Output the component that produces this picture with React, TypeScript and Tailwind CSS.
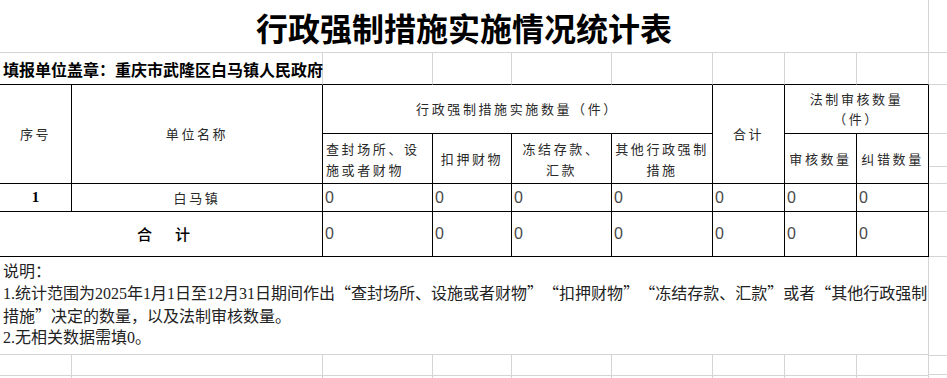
import React from 'react';

const cols = [72, 251, 110, 79, 100, 101, 72, 72, 72];

const head = "font-['Noto_Sans_CJK_SC',sans-serif] text-[13px] tracking-[2.6px] text-[#2a2a2a] font-normal";
const zero = "font-['Liberation_Sans_Narrow','Liberation_Sans',sans-serif] text-[16px] text-[#4a4a4a] text-left align-middle pl-[2px] border-r border-b border-black";
const blk = 'border-r border-b border-black';
const gry = 'border-r border-b border-[#d4d4d4]';

const Num: React.FC<{ children: React.ReactNode }> = ({ children }) => (
  <span className="font-['Liberation_Serif',serif]">{children}</span>
);

// full-width curly quotes, as the sheet's Song font draws them
const Lq = () => <span className="inline-block w-[16px] text-right">“</span>;
const Rq = () => <span className="inline-block w-[16px] text-left">”</span>;

const sideRows = [53, 32, 49, 33, 17, 28, 45, 99, 19, 21];

export default function App() {
  return (
    <div className="w-[947px] h-[378px] overflow-hidden bg-white flex">
      <table className="table-fixed border-separate border-spacing-0 w-[929px] shrink-0">
        <colgroup>
          {cols.map((w, i) => (
            <col key={i} style={{ width: w }} />
          ))}
        </colgroup>
        <tbody>
          {/* Title */}
          <tr className="h-[53px]">
            <td colSpan={9} className={`${gry} text-center align-middle font-['Noto_Sans_CJK_SC',sans-serif] font-bold text-[32px] text-black pt-[1px]`}>
              行政强制措施实施情况统计表
            </td>
          </tr>

          {/* Filler row */}
          <tr className="h-[32px]">
            <td colSpan={2} className="border-r border-[#d4d4d4] border-b border-b-black pl-[3px] align-middle whitespace-nowrap font-['Noto_Sans_CJK_SC',sans-serif] font-bold text-[16px] text-black">
              填报单位盖章：重庆市武隆区白马镇人民政府
            </td>
            {[0, 1, 2, 3, 4, 5, 6].map(i => (
              <td key={i} className="border-r border-[#d4d4d4] border-b border-b-black" />
            ))}
          </tr>

          {/* Header */}
          <tr className="h-[49px]">
            <td rowSpan={2} className={`${blk} ${head} text-center align-middle`}>序号</td>
            <td rowSpan={2} className={`${blk} ${head} text-center align-middle`}>单位名称</td>
            <td colSpan={4} className={`${blk} ${head} text-center align-middle`}>行政强制措施实施数量（件）</td>
            <td rowSpan={2} className={`${blk} ${head} text-center align-middle`}>合计</td>
            <td colSpan={2} className={`${blk} ${head} text-center align-middle leading-[20px]`}>
              法制审核数量
              <br />
              （件）
            </td>
          </tr>
          <tr className="h-[50px]">
            <td className={`${blk} ${head} text-left align-middle pl-[3px] leading-[21px]`}>
              查封场所、设
              <br />
              施或者财物
            </td>
            <td className={`${blk} ${head} text-center align-middle`}>扣押财物</td>
            <td className={`${blk} ${head} text-center align-middle leading-[21px]`}>
              冻结存款、
              <br />
              汇款
            </td>
            <td className={`${blk} ${head} text-center align-middle leading-[21px]`}>
              其他行政强制
              <br />
              措施
            </td>
            <td className={`${blk} ${head} text-center align-middle`}>审核数量</td>
            <td className={`${blk} ${head} text-center align-middle`}>纠错数量</td>
          </tr>

          {/* Data */}
          <tr className="h-[28px]">
            <td className={`${blk} text-center align-middle font-['Liberation_Serif',serif] font-bold text-[15px] text-black`}>1</td>
            <td className={`${blk} ${head} text-center align-middle`}>白马镇</td>
            {[0, 1, 2, 3, 4, 5, 6].map(i => (
              <td key={i} className={zero}>0</td>
            ))}
          </tr>

          {/* Total */}
          <tr className="h-[45px]">
            <td colSpan={2} className={`${blk} align-middle`}>
              <div className="flex justify-center gap-[23px] pl-[5px] font-['Noto_Sans_CJK_SC',sans-serif] text-[15px] font-medium text-black">
                <span>合</span>
                <span>计</span>
              </div>
            </td>
            {[0, 1, 2, 3, 4, 5, 6].map(i => (
              <td key={i} className={zero}>0</td>
            ))}
          </tr>

          {/* Notes */}
          <tr className="h-[98px]">
            <td colSpan={9} className={`${gry} align-middle pl-[3px] pb-[2px] whitespace-nowrap font-['Noto_Sans_CJK_SC',sans-serif] text-[16px] leading-[21.7px] text-[#222]`}>
              说明：
              <br />
              <Num>1.</Num>统计范围为<Num>2025</Num>年<Num>1</Num>月<Num>1</Num>日至<Num>12</Num>月<Num>31</Num>日期间作出<Lq />查封场所、设施或者财物<Rq /><Lq />扣押财物<Rq /><Lq />冻结存款、汇款<Rq />或者<Lq />其他行政强制
              <br />
              措施<Rq />决定的数量，以及法制审核数量。
              <br />
              <Num>2.</Num>无相关数据需填<Num>0</Num>。
            </td>
          </tr>

          {/* Empty sheet rows */}
          {[0, 1].map(r => (
            <tr key={r} className="h-[21px]">
              {cols.map((_, i) => (
                <td key={i} className={gry} />
              ))}
            </tr>
          ))}
        </tbody>
      </table>

      {/* Next sheet column */}
      <div className="flex flex-col w-[18px] shrink-0">
        {sideRows.map((h, i) => (
          <div key={i} className="border-b border-[#d4d4d4] shrink-0" style={{ height: h }} />
        ))}
      </div>
    </div>
  );
}
